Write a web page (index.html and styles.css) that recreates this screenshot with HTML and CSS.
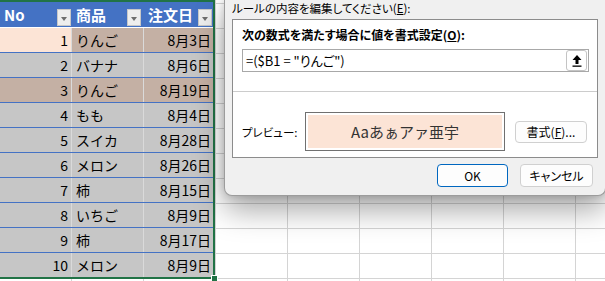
FILE: index.html
```html
<!DOCTYPE html>
<html>
	<head>
		<meta charset="utf-8" />
		<title>条件付き書式</title>
		<link rel="stylesheet" href="styles.css">
	</head>
	<body>
	<div class="screen">
		<div class="table">
			<div class="row head">
				<div class="cell a">No<span class="filter"></span></div>
				<div class="cell b">商品<span class="filter"></span></div>
				<div class="cell c">注文日<span class="filter"></span></div>
			</div>
			<div class="row hit">
				<div class="cell a active">1</div>
				<div class="cell b">りんご</div>
				<div class="cell c">8月3日</div>
			</div>
			<div class="row">
				<div class="cell a">2</div>
				<div class="cell b">バナナ</div>
				<div class="cell c">8月6日</div>
			</div>
			<div class="row hit">
				<div class="cell a">3</div>
				<div class="cell b">りんご</div>
				<div class="cell c">8月19日</div>
			</div>
			<div class="row">
				<div class="cell a">4</div>
				<div class="cell b">もも</div>
				<div class="cell c">8月4日</div>
			</div>
			<div class="row">
				<div class="cell a">5</div>
				<div class="cell b">スイカ</div>
				<div class="cell c">8月28日</div>
			</div>
			<div class="row">
				<div class="cell a">6</div>
				<div class="cell b">メロン</div>
				<div class="cell c">8月26日</div>
			</div>
			<div class="row">
				<div class="cell a">7</div>
				<div class="cell b">柿</div>
				<div class="cell c">8月15日</div>
			</div>
			<div class="row">
				<div class="cell a">8</div>
				<div class="cell b">いちご</div>
				<div class="cell c">8月9日</div>
			</div>
			<div class="row">
				<div class="cell a">9</div>
				<div class="cell b">柿</div>
				<div class="cell c">8月17日</div>
			</div>
			<div class="row last">
				<div class="cell a">10</div>
				<div class="cell b">メロン</div>
				<div class="cell c">8月9日</div>
			</div>
			<span class="handle"></span>
		</div>

		<div class="dialog">
			<p class="caption">ルールの内容を編集してください(<u>E</u>):</p>
			<div class="panel">
				<div class="upper">
					<p class="label">次の数式を満たす場合に値を書式設定(<u>O</u>):</p>
					<div class="formula">
						<span>=($B1 = "りんご")</span>
						<button type="button" class="pick">
							<svg width="10" height="12" viewBox="0 0 10 12"><path d="M5 0 L9.5 5 H6.5 V9 H3.5 V5 H0.5 Z" fill="#000"/><rect x="0.5" y="10.5" width="9" height="1.3" fill="#000"/></svg>
						</button>
					</div>
				</div>
				<div class="lower">
					<span class="plabel">プレビュー:</span>
					<div class="preview"><div class="sample">Aaあぁアァ亜宇</div></div>
					<button type="button" class="btn format">書式(<u>F</u>)...</button>
				</div>
			</div>
			<div class="actions">
				<button type="button" class="btn ok">OK</button>
				<button type="button" class="btn cancel">キャンセル</button>
			</div>
		</div>
	</div>
	</body>
</html>
```

FILE: styles.css
```css
*{
	box-sizing: border-box;
}
body{
	margin: 0;
	font-family: "Noto Sans CJK JP", "Noto Sans", sans-serif;
}
.screen{
	position: relative;
	width: 605px;
	height: 281px;
	overflow: hidden;
	background-color: #ffffff;
	background-image:
		linear-gradient(to right, #d4d4d4 1px, transparent 1px),
		linear-gradient(to bottom, #d4d4d4 1px, transparent 1px);
	background-size: 72px 100%, 100% 25px;
	background-position: 71px 0, 0 3px;
}
.table{
	position: relative;
	width: 215px;
	border: 2px solid #217346;
	border-left: none;
	font-size: 14px;
	color: #000;
}
.row{
	display: flex;
	height: 25px;
	border-bottom: 1px solid #4472c4;
	background-color: #c6c6c6;
}
.row.last{
	height: 24px;
	border-bottom: none;
}
.cell{
	display: flex;
	align-items: center;
	height: 100%;
	border-right: 1px solid #dadada;
}
.a{
	width: 72px;
	justify-content: flex-end;
	padding-right: 3px;
}
.b{
	width: 72px;
	padding-left: 4px;
}
.c{
	width: 69px;
	border-right: none;
	justify-content: flex-end;
	padding-right: 2px;
}
.hit{
	background-color: #c4b0a4;
}
.active{
	background-color: #fce4d6;
}
.row.head{
	height: 26px;
	background-color: #4472c4;
	border-bottom: 1px solid #ffffff;
	color: #ffffff;
	font-weight: bold;
	font-size: 15px;
}
.head .cell{
	justify-content: flex-start;
	align-items: center;
	padding-left: 4px;
	padding-right: 1px;
	border-right: none;
}
.head .b{
	padding-right: 3px;
}
.filter{
	position: relative;
	margin-left: auto;
	align-self: flex-end;
	margin-bottom: 1px;
	width: 14px;
	height: 17px;
	background-color: #eeeeee;
	border: 1px solid #c8c8c8;
}
.filter::after{
	content: "";
	position: absolute;
	left: 3px;
	top: 7px;
	border-left: 3.5px solid transparent;
	border-right: 3.5px solid transparent;
	border-top: 4px solid #6e6e6e;
}
.handle{
	position: absolute;
	right: -5px;
	bottom: -5px;
	width: 7px;
	height: 7px;
	background-color: #217346;
	border: 1px solid #ffffff;
}

/* dialog */
.dialog{
	position: absolute;
	left: 224px;
	top: 0;
	width: 382px;
	height: 196px;
	padding: 0 7px 0 7px;
	background-color: #f0f0f0;
	border: 1px solid #9c9c9c;
	border-top: none;
	border-radius: 0 0 8px 8px;
	box-shadow: 0 14px 30px rgba(0,0,0,0.35), 0 0 8px rgba(0,0,0,0.18);
	font-size: 11px;
	font-feature-settings: "palt";
	color: #000;
}
.dialog p{
	margin: 0;
}
.caption{
	height: 19px;
	padding-top: 1px;
	line-height: 14px;
	font-size: 11.5px;
}
.panel{
	width: 366px;
	height: 139px;
	background-color: #ffffff;
	border: 1px solid #8c8c8c;
}
.upper{
	height: 72px;
	padding: 8px 8px 0 9px;
	border-bottom: 1px solid #cccccc;
}
.label{
	font-weight: bold;
	font-size: 12px;
	line-height: 14px;
}
.formula{
	display: flex;
	align-items: center;
	height: 23px;
	margin-top: 7px;
	padding: 0 1px 0 3px;
	border: 1px solid #a8a8a8;
	font-size: 13px;
}
.pick{
	display: flex;
	align-items: center;
	justify-content: center;
	margin-left: auto;
	width: 21px;
	height: 21px;
	padding: 0;
	background-color: #ffffff;
	border: 1px solid #c4c4c4;
	border-radius: 3px;
}
.lower{
	display: flex;
	align-items: center;
	padding: 20px 0 0 9px;
}
.plabel{
	width: 63px;
	font-size: 11.5px;
}
.preview{
	width: 200px;
	height: 39px;
	padding: 2px;
	border: 1px solid #707070;
}
.sample{
	display: flex;
	align-items: center;
	justify-content: center;
	height: 100%;
	background-color: #fce4d6;
	font-size: 15px;
	font-feature-settings: normal;
	color: #333333;
}
.btn{
	height: 23px;
	padding: 0;
	background-color: #fdfdfd;
	border: 1px solid #d0d0d0;
	border-radius: 4px;
	font-family: inherit;
	font-size: 12px;
	font-feature-settings: "palt";
	color: #000;
}
.format{
	width: 72px;
	height: 22px;
	margin-left: 10px;
}
.actions{
	display: flex;
	justify-content: flex-end;
	gap: 12px;
	margin-top: 6px;
	padding-right: 5px;
}
.ok{
	width: 71px;
	border-color: #0067c0;
}
.cancel{
	width: 73px;
}
```
